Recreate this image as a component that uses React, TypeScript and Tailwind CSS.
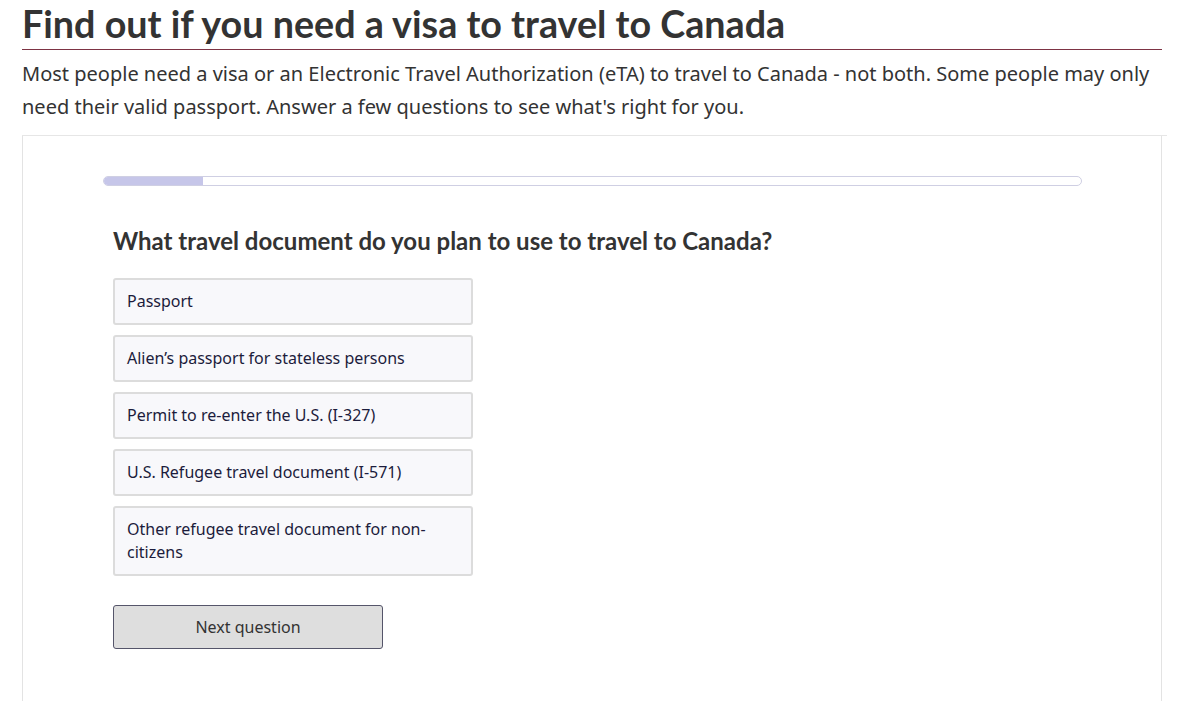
import React, { useState } from "react";

const options = [
  "Passport",
  "Alien\u2019s passport for stateless persons",
  "Permit to re-enter the U.S. (I-327)",
  "U.S. Refugee travel document (I-571)",
  "Other refugee travel document for non-citizens",
];

const App = () => {
  const [selected, setSelected] = useState<number | null>(null);

  return (
    <div className="min-h-[701px] bg-white pl-[22px] pr-[17px] pt-[1px] font-['Noto_Sans',sans-serif] text-[#333]">
      {/* page title */}
      <h1 className="mt-[2px] border-b border-[#7d3344] pb-[4px] font-['Lato',sans-serif] text-[37.7px] font-bold leading-[42px] text-[#333]">
        Find out if you need a visa to travel to Canada
      </h1>
      <p className="mt-[7px] text-[20px] leading-[33px]">
        Most people need a visa or an Electronic Travel Authorization (eTA) to travel to Canada - not both. Some people
        may only need their valid passport. Answer a few questions to see what's right for you.
      </p>

      {/* wizard card */}
      <div className="mt-[12px] mr-[-5px] border-t border-[#e6e6e6]">
        <div className="mr-[5px] min-h-[600px] border-x border-[#e3e3e3] px-[80px] pt-[40px]">
          <div className="h-[10px] w-[979px] overflow-hidden rounded-full border border-[#cfcfe3] bg-white">
            <div className="h-full w-[99px] bg-[#c6c6e9]" />
          </div>

          <h2 className="mt-[40px] pl-[10px] font-['Lato',sans-serif] text-[24px] font-bold leading-[30px] text-[#333]">
            What travel document do you plan to use to travel to Canada?
          </h2>

          <div className="mt-[22px] flex w-[360px] flex-col gap-[10px] pl-[10px] box-content">
            {options.map((opt, i) => (
              <button
                key={opt}
                type="button"
                onClick={() => setSelected(i)}
                className={
                  "w-[360px] rounded-[3px] border-2 px-[12px] py-[10px] text-left text-[16px] leading-[23px] text-[#1c1c3c] " +
                  (selected === i ? "border-[#7b7bb8] bg-[#ececf8]" : "border-[#dcdcdc] bg-[#f8f8fb]")
                }
              >
                {opt}
              </button>
            ))}
          </div>

          <div className="mt-[29px] pl-[10px]">
            <button
              type="button"
              className="h-[44px] w-[270px] rounded-[3px] border border-[#55556a] bg-[#dedede] text-[16px] text-[#333]"
            >
              Next question
            </button>
          </div>
        </div>
      </div>
    </div>
  );
};

export default App;
